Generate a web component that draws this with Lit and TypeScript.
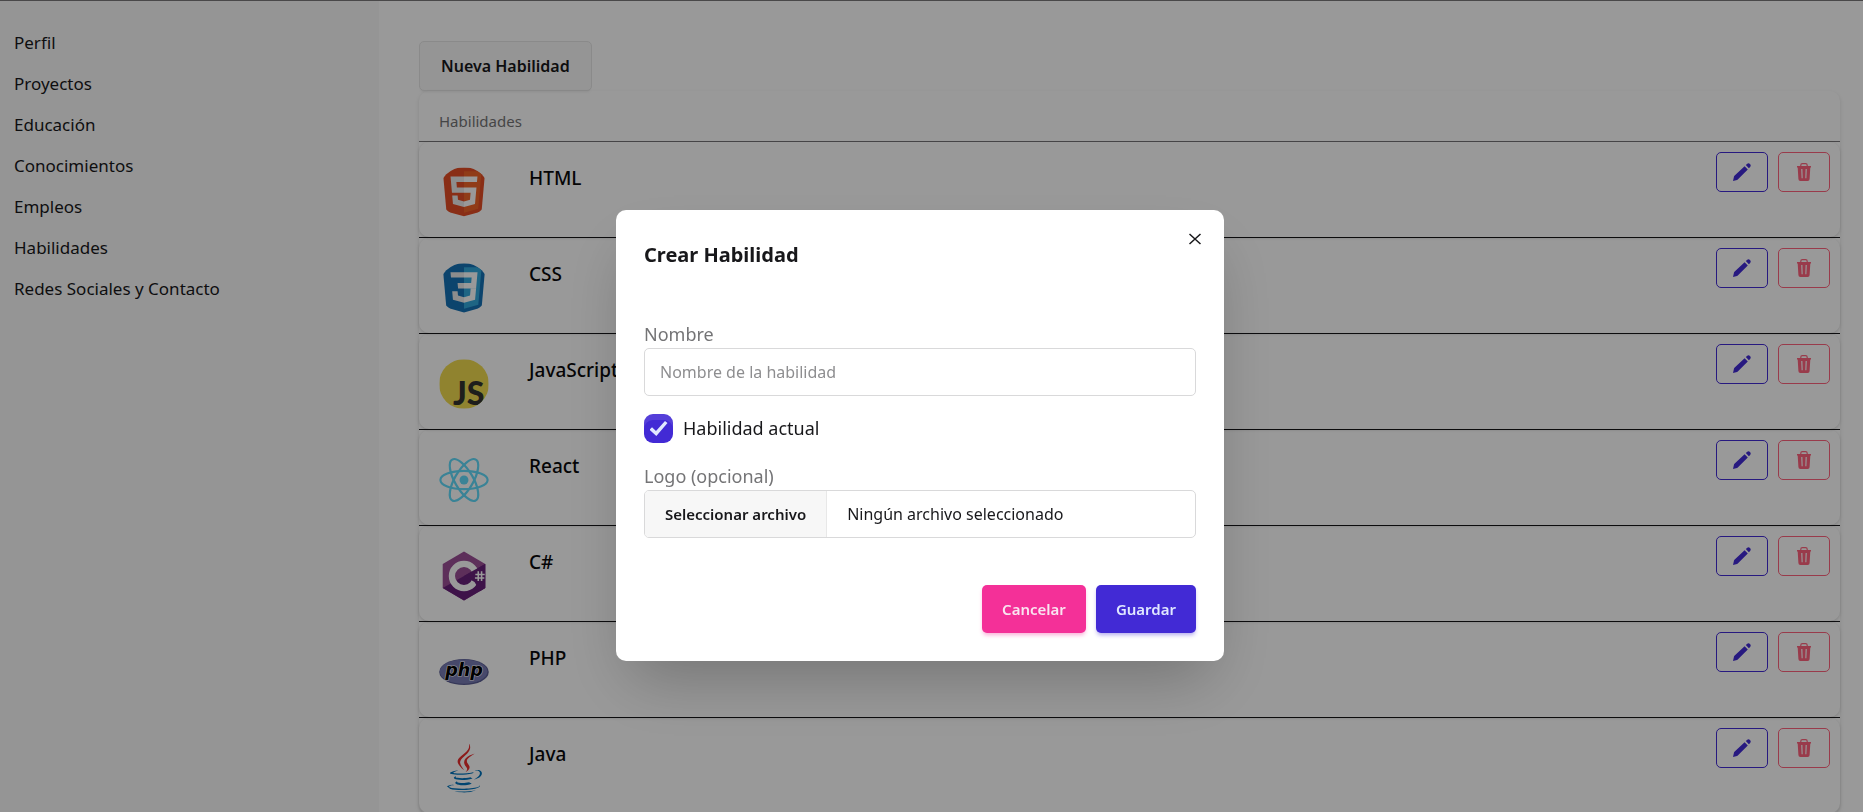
import { LitElement, html, css, svg } from "lit";
import { customElement, state } from "lit/decorators.js";

const html5 = svg`
  <path fill="#E44D26" d="M19.037 113.876L9.032 1.661h109.936l-10.016 112.198-45.019 12.48z"/>
  <path fill="#F16529" d="M64 116.8l36.378-10.086 8.559-95.878H64z"/>
  <path fill="#EBEBEB" d="M64 52.455H45.788L44.53 38.361H64V24.599H29.489l.33 3.692 3.382 37.927H64zm0 35.743l-.061.017-15.327-4.14-.979-10.975H33.816l1.928 21.609 28.193 7.826.063-.017z"/>
  <path fill="#fff" d="M63.952 52.455v13.763h16.947l-1.597 17.849-15.35 4.143v14.319l28.215-7.82.207-2.325 3.234-36.233.335-3.696h-3.708zm0-27.856v13.762h33.244l.276-3.092.628-6.978.329-3.692z"/>`;

const css3 = svg`
  <path fill="#1572B6" d="M18.814 114.123L8.76 1.352h110.48l-10.064 112.754-45.243 12.543z"/>
  <path fill="#33A9DC" d="M64.001 117.062l36.559-10.136 8.601-96.354h-45.16z"/>
  <path fill="#fff" d="M64.001 51.429h18.302l1.264-14.163H64.001V23.435h34.682l-.332 3.711-3.4 38.114h-30.95z"/>
  <path fill="#EBEBEB" d="M64.083 87.349l-.061.018-15.403-4.159-.985-11.031H33.752l1.937 21.717 28.331 7.863.063-.018z"/>
  <path fill="#fff" d="M81.127 64.675l-1.666 18.522-15.426 4.164v14.39l28.354-7.858.208-2.337 2.406-26.881z"/>
  <path fill="#EBEBEB" d="M64.048 23.435v13.831H30.64l-.277-3.108-.63-7.012-.331-3.711zm-.047 27.996v13.831H48.792l-.277-3.108-.631-7.012-.33-3.711z"/>`;

const javascript = svg`
  <path fill="#F0DB4F" d="M1.408 1.408h125.184v125.185H1.408z"/>
  <text x="76" y="117" text-anchor="middle" font-family="Lato, 'Liberation Sans', sans-serif" font-weight="900" font-size="82" fill="#323330">JS</text>`;

const react = svg`
  <circle cx="64" cy="64" r="11.4" fill="#61DAFB"/>
  <g fill="none" stroke="#61DAFB" stroke-width="5.6">
    <ellipse cx="64" cy="64" rx="60.5" ry="23.5"/>
    <ellipse cx="64" cy="64" rx="60.5" ry="23.5" transform="rotate(60 64 64)"/>
    <ellipse cx="64" cy="64" rx="60.5" ry="23.5" transform="rotate(120 64 64)"/>
  </g>`;

const csharp = svg`
  <path fill="#9B4F96" d="M64 1.500L118.500 33v62L64 126.500 9.500 95V33z"/>
  <path fill="#68217A" d="M118.500 33v62L64 126.500 9.500 95z"/>
  <circle cx="64" cy="64" r="31" fill="none" stroke="#fff" stroke-width="16"/>
  <path fill="#68217A" d="M64 64l26.500-15.500L118 33v62l-13 8-14-23.500z"/>
  <path fill="none" stroke="#fff" stroke-width="4" d="M100.500 52v25M109 52v25M93 60h24M92 69h24"/>`;

const php = svg`
  <ellipse cx="64" cy="64" rx="63.500" ry="33.500" fill="#5A5D93"/>
  <ellipse cx="63" cy="63" rx="61" ry="31" fill="#777BB3"/>
  <text x="64" y="74" text-anchor="middle" font-family="'DejaVu Sans', sans-serif" font-weight="700" font-style="italic" font-size="45" fill="#000" stroke="#fff" stroke-width="3" paint-order="stroke">php</text>`;

const java = svg`
  <path fill="#0074BD" d="M47.617 98.12s-4.767 2.774 3.397 3.71c9.892 1.13 14.947.968 25.845-1.092 0 0 2.871 1.795 6.873 3.351-24.439 10.47-55.308-.607-36.115-5.969zm-2.988-13.665s-5.348 3.959 2.823 4.805c10.567 1.091 18.91 1.18 33.354-1.6 0 0 1.993 2.025 5.132 3.131-29.542 8.64-62.446.68-41.309-6.336z"/>
  <path fill="#EA2D2E" d="M69.802 61.271c6.025 6.935-1.58 13.17-1.58 13.17s15.289-7.891 8.269-17.777c-6.559-9.215-11.587-13.792 15.635-29.58 0 .001-42.731 10.67-22.324 34.187z"/>
  <path fill="#0074BD" d="M102.123 108.229s3.529 2.91-3.888 5.159c-14.102 4.272-58.706 5.56-71.094.171-4.451-1.938 3.899-4.625 6.526-5.192 2.739-.593 4.303-.485 4.303-.485-4.953-3.487-32.013 6.85-13.743 9.815 49.821 8.076 90.817-3.637 77.896-9.468zM49.912 70.294s-22.686 5.389-8.033 7.348c6.188.828 18.518.638 30.011-.326 9.39-.789 18.813-2.474 18.813-2.474s-3.308 1.419-5.704 3.053c-23.042 6.061-67.544 3.238-54.731-2.958 10.832-5.239 19.644-4.643 19.644-4.643zM90.609 93.041c23.421-12.167 12.591-23.86 5.032-22.285-1.848.385-2.677.72-2.677.72s.688-1.079 2-1.543c14.953-5.255 26.451 15.503-4.823 23.725 0-.002.359-.327.468-.617z"/>
  <path fill="#EA2D2E" d="M76.491 1.587s12.968 12.976-12.303 32.923c-20.266 16.006-4.621 25.13-.007 35.559-11.831-10.673-20.509-20.07-14.688-28.815 8.548-12.834 32.229-19.059 26.998-39.667z"/>
  <path fill="#0074BD" d="M52.214 126.021c22.476 1.437 57-.8 57.817-11.436 0 0-1.571 4.032-18.577 7.231-19.186 3.612-42.854 3.191-56.887.874 0 .001 2.875 2.381 17.647 3.331z"/>`;

const skills = [
  { name: "HTML", logo: html5 },
  { name: "CSS", logo: css3 },
  { name: "JavaScript", logo: javascript },
  { name: "React", logo: react },
  { name: "C#", logo: csharp },
  { name: "PHP", logo: php },
  { name: "Java", logo: java },
];

const sections = [
  "Perfil",
  "Proyectos",
  "Educación",
  "Conocimientos",
  "Empleos",
  "Habilidades",
  "Redes Sociales y Contacto",
];

@customElement("skill-dialog")
export class SkillDialog extends LitElement {
  static styles = css`
    :host {
      position: fixed;
      inset: 0;
      display: grid;
      place-items: center;
      padding: 59px 23px 0 0;
      background: rgba(0, 0, 0, 0.4);
      color: #18181b;
      font-family: "Noto Sans", sans-serif;
    }
    .box {
      position: relative;
      box-sizing: border-box;
      width: 92%;
      max-width: 608px;
      padding: 28px;
      border-radius: 10px;
      background: #fff;
      box-shadow: 0 30px 60px -14px rgba(0, 0, 0, 0.25);
    }
    .close {
      position: absolute;
      top: 10px;
      right: 10px;
      width: 38px;
      height: 38px;
      padding: 0;
      border: 0;
      background: none;
      display: grid;
      place-items: center;
    }
    .title {
      margin: 0 0 49px;
      font-size: 20px;
      line-height: 34px;
      font-weight: 700;
    }
    form {
      display: flex;
      flex-direction: column;
    }
    .label {
      font-size: 18px;
      line-height: 27px;
      color: #747476;
    }
    .text {
      box-sizing: border-box;
      width: 100%;
      height: 48px;
      padding: 0 15px;
      border: 1px solid #d9d9da;
      border-radius: 5px;
      background: #fff;
      font: 16px "Noto Sans", sans-serif;
      color: inherit;
    }
    .text::placeholder {
      color: #8e8e90;
      opacity: 1;
    }
    .check {
      display: flex;
      align-items: center;
      gap: 10px;
      margin: 18px 0 20px;
      font-size: 18px;
      line-height: 29px;
    }
    .tick {
      appearance: none;
      width: 29px;
      height: 29px;
      margin: 0;
      border-radius: 9px;
      background: #422ad5;
      box-shadow: inset 0 6px 0 rgba(255, 255, 255, 0.1);
      display: grid;
      place-items: center;
    }
    .tick:checked::before {
      content: "";
      width: 18px;
      height: 15px;
      background: #e0e7ff;
      clip-path: polygon(0 58%, 14% 42%, 36% 66%, 86% 0, 100% 14%, 38% 100%);
    }
    .file {
      position: relative;
      display: flex;
      height: 46px;
      border: 1px solid #d9d9da;
      border-radius: 5px;
      overflow: hidden;
      font-size: 16px;
      line-height: 46px;
    }
    .native {
      position: absolute;
      inset: 0;
      opacity: 0;
    }
    .pick {
      padding: 0 20px;
      border-right: 1px solid #e8e8e8;
      background: #f7f7f7;
      font-size: 15px;
      font-weight: 600;
    }
    .chosen {
      padding: 0 20px;
    }
    .actions {
      display: flex;
      justify-content: flex-end;
      gap: 10px;
      margin-top: 47px;
    }
    .btn {
      height: 48px;
      padding: 0 20px;
      border: 0;
      border-radius: 5px;
      font: 600 15px "Noto Sans", sans-serif;
    }
    .cancel {
      background: #f43098;
      color: #f9e4f0;
      box-shadow: 0 3px 4px -1px rgba(244, 48, 152, 0.4);
    }
    .save {
      background: #422ad5;
      color: #e0e7ff;
      box-shadow: 0 3px 4px -1px rgba(66, 42, 213, 0.4);
    }
  `;

  render() {
    return html`
      <section class="box" role="dialog" aria-modal="true" aria-labelledby="title">
        <button class="close" type="button" aria-label="Cerrar">
          <svg width="12" height="12" viewBox="0 0 12 12" fill="none" stroke="#18181b" stroke-width="1.500">
            <path d="M.5 1l11 10M11.500 1L.5 11" />
          </svg>
        </button>
        <h2 class="title" id="title">Crear Habilidad</h2>
        <form>
          <label class="label" for="name">Nombre</label>
          <input class="text" id="name" type="text" placeholder="Nombre de la habilidad" />
          <label class="check"><input class="tick" type="checkbox" checked />Habilidad actual</label>
          <label class="label" for="logo">Logo (opcional)</label>
          <div class="file">
            <span class="pick">Seleccionar archivo</span>
            <span class="chosen">Ningún archivo seleccionado</span>
            <input class="native" id="logo" type="file" accept="image/*" />
          </div>
          <div class="actions">
            <button class="btn cancel" type="button">Cancelar</button>
            <button class="btn save" type="button">Guardar</button>
          </div>
        </form>
      </section>
    `;
  }
}

@customElement("app-root")
export class AppRoot extends LitElement {
  @state() private open = true;

  static styles = css`
    :host {
      display: grid;
      grid-template-columns: 379px minmax(0, 1fr);
      box-sizing: border-box;
      height: 100vh;
      overflow: hidden;
      border-top: 1px solid #7a787a;
      background: #fff;
      color: #18181b;
      font-family: "Noto Sans", sans-serif;
    }
    .side {
      background: #f8f8f8;
      padding: 21px 14px;
    }
    .link {
      display: block;
      font-size: 17px;
      line-height: 41px;
      color: inherit;
      text-decoration: none;
    }
    .main {
      padding: 40px 23px 0 40px;
    }
    .new {
      display: block;
      height: 50px;
      padding: 0 21px;
      border: 1px solid #e6e6e6;
      border-radius: 5px;
      background: #f8f8f8;
      box-shadow: 0 3px 3px -2px rgba(0, 0, 0, 0.08);
      font: 600 16px "Noto Sans", sans-serif;
      color: #18181b;
    }
    .table {
      width: 100%;
      border-collapse: separate;
      border-spacing: 0;
      border-radius: 10px;
      box-shadow: 0 2px 4px rgba(0, 0, 0, 0.12);
    }
    .head {
      height: 51px;
      padding: 10px 20px 0;
      box-sizing: border-box;
      border-bottom: 1px solid #777578;
      text-align: left;
      font-size: 15px;
      line-height: 20px;
      font-weight: 400;
      color: #747476;
    }
    .cell {
      padding: 0;
      border-bottom: 1px solid #18181b;
    }
    .row {
      display: flex;
      align-items: flex-start;
      box-sizing: border-box;
      height: 95px;
      padding: 10px 10px 10px 20px;
      border-radius: 10px;
      box-shadow: 0 1px 3px rgba(0, 0, 0, 0.16);
    }
    .logo {
      width: 50px;
      height: 50px;
      margin: 15px 40px 0 0;
      border-radius: 50%;
    }
    .name {
      flex: 1;
      margin-top: 11px;
      font-size: 19px;
      line-height: 30px;
      font-weight: 500;
      color: #09090b;
    }
    .tools {
      display: flex;
      gap: 10px;
    }
    .tool {
      width: 52px;
      height: 40px;
      padding: 0;
      border: 1px solid currentColor;
      border-radius: 5px;
      background: none;
      display: grid;
      place-items: center;
    }
    .edit {
      color: #422ad5;
    }
    .remove {
      color: #ff637d;
    }
  `;

  render() {
    return html`
      <nav class="side">
        ${sections.map((name) => html`<a class="link" href="#">${name}</a>`)}
      </nav>
      <main class="main">
        <button class="new" type="button">Nueva Habilidad</button>
        <table class="table">
          <thead>
            <tr><th class="head">Habilidades</th></tr>
          </thead>
          <tbody>
            ${skills.map(
              (skill) => html`
                <tr>
                  <td class="cell">
                    <div class="row">
                      <svg class="logo" viewBox="0 0 128 128" aria-hidden="true">${skill.logo}</svg>
                      <span class="name">${skill.name}</span>
                      <div class="tools">
                        <button class="tool edit" type="button" aria-label="Editar">
                          <svg width="18" height="18" viewBox="0 0 18 18" fill="currentColor">
                            <path d="M0 18l1-4.400Q1.200 13 1.700 12.600L11.600 3.200l3.200 3.200L5 16.200q-.5.5-1 .7z" />
                            <path d="M12.800 2.100l1.200-1.200a2.200 2.200 0 0 1 3.100 3.100l-1.200 1.200z" />
                          </svg>
                        </button>
                        <button class="tool remove" type="button" aria-label="Eliminar">
                          <svg width="14" height="18" viewBox="0 0 14 18" fill="currentColor">
                            <path fill-rule="evenodd" d="M0 3h14v1.500h-.7L12.600 16a2 2 0 0 1-2 2H3.400a2 2 0 0 1-2-2L.7 4.500H0zM4.200 6l.4 9.200h1.100L5.400 6zM8.600 6l-.3 9.200h1.100L9.800 6z" />
                            <path fill="none" stroke="currentColor" stroke-width="1.200" d="M3.800 3.500V2.300Q3.800.7 5.400.7h3.200q1.600 0 1.600 1.600v1.200" />
                          </svg>
                        </button>
                      </div>
                    </div>
                  </td>
                </tr>
              `,
            )}
          </tbody>
        </table>
      </main>
      ${this.open ? html`<skill-dialog></skill-dialog>` : null}
    `;
  }
}
